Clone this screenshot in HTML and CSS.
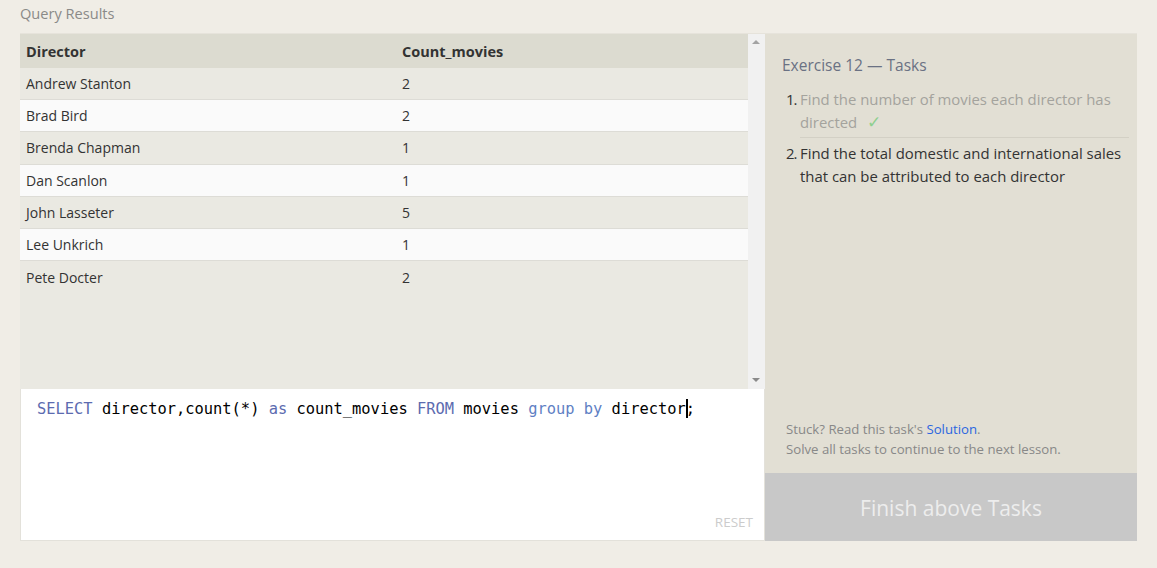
FILE: index.html
```html
<!DOCTYPE html>
<html>
<head>
<meta charset="utf-8">
<link rel="stylesheet" href="styles.css">
</head>
<body>
<div class="page">
  <div class="title">Query Results</div>
  <div class="main">
    <div class="left">
      <div class="results">
        <div class="table">
          <div class="row head"><div class="c1">Director</div><div class="c2">Count_movies</div></div>
          <div class="row"><div class="c1">Andrew Stanton</div><div class="c2">2</div></div>
          <div class="row"><div class="c1">Brad Bird</div><div class="c2">2</div></div>
          <div class="row"><div class="c1">Brenda Chapman</div><div class="c2">1</div></div>
          <div class="row"><div class="c1">Dan Scanlon</div><div class="c2">1</div></div>
          <div class="row"><div class="c1">John Lasseter</div><div class="c2">5</div></div>
          <div class="row"><div class="c1">Lee Unkrich</div><div class="c2">1</div></div>
          <div class="row"><div class="c1">Pete Docter</div><div class="c2">2</div></div>
        </div>
        <div class="scrollbar">
          <span class="arrow up"></span>
          <span class="arrow down"></span>
        </div>
      </div>
      <div class="editor">
        <div class="code"><span class="kw">SELECT</span> director,count(*) <span class="kw">as</span> count_movies <span class="kw">FROM</span> movies <span class="kw2">group</span> <span class="kw2">by</span> director<span class="cursor"></span>;</div>
        <div class="reset">RESET</div>
      </div>
    </div>
    <div class="right">
      <div class="tasks">
        <div class="ex-title">Exercise 12 — Tasks</div>
        <ol class="list">
          <li class="done"><span class="num">1.</span><span class="txt">Find the number of movies each director has directed <span class="check">✓</span></span></li>
          <li class="todo"><span class="num">2.</span><span class="txt">Find the total domestic and international sales that can be attributed to each director</span></li>
        </ol>
        <div class="hint">
          <div>Stuck? Read this task's <span class="link">Solution</span>.</div>
          <div>Solve all tasks to continue to the next lesson.</div>
        </div>
      </div>
      <div class="finish">Finish above Tasks</div>
    </div>
  </div>
</div>
</body>
</html>
```
FILE: styles.css
```css
html, body {
  margin: 0;
  padding: 0;
  background: #f0ede6;
}
body {
  font-family: "Open Sans", "Noto Sans", sans-serif;
  color: #333;
}
.page {
  padding: 0 20px;
}
.title {
  height: 33px;
  line-height: 27px;
  font-size: 14.6px;
  color: #8a8a88;
}
.main {
  display: flex;
  width: 1117px;
  height: 508px;
  border-top: 1px solid #e6e3db;
  box-sizing: border-box;
}
.left {
  width: 745px;
  display: flex;
  flex-direction: column;
}
.results {
  height: 355px;
  display: flex;
  background: #eae9e2;
}
.table {
  flex: 1;
}
.row {
  display: flex;
  height: 32.2px;
  box-sizing: border-box;
  border-bottom: 1px solid #dddcd6;
  font-size: 14px;
  align-items: center;
  background: #eae9e2;
}
.row:nth-child(odd) {
  background: #fafafa;
}
.row.head {
  height: 34px;
  background: #dcdbd0;
  font-weight: 700;
  font-size: 14.5px;
  border-bottom: none;
}
.row:last-child {
  border-bottom: none;
}
.c1 {
  width: 376px;
  padding-left: 6px;
}
.c2 {
  flex: 1;
}
.scrollbar {
  width: 17px;
  background: #f1f1f1;
  position: relative;
}
.arrow {
  position: absolute;
  left: 4px;
  width: 0;
  height: 0;
  border-left: 4px solid transparent;
  border-right: 4px solid transparent;
}
.arrow.up {
  top: 6px;
  border-bottom: 4px solid #a3a3a3;
}
.arrow.down {
  bottom: 7px;
  border-top: 4px solid #8a8a8a;
}
.editor {
  flex: 1;
  background: #fff;
  border: 1px solid #e3e1da;
  border-top: none;
  display: flex;
  flex-direction: column;
  justify-content: space-between;
  padding: 9px 11px 9px 16px;
}
.code {
  font-family: "DejaVu Sans Mono", "Liberation Mono", monospace;
  font-size: 15.4px;
  color: #000;
  line-height: 22px;
}
.kw {
  color: #5c6bb0;
}
.kw2 {
  color: #5f7fc4;
}
.cursor {
  display: inline-block;
  width: 2px;
  height: 19px;
  background: #000;
  vertical-align: -4px;
  margin-right: -2px;
}
.reset {
  align-self: flex-end;
  font-size: 13.5px;
  color: #cccccc;
}
.right {
  width: 372px;
  display: flex;
  flex-direction: column;
  background: #e2dfd4;
}
.tasks {
  flex: 1;
  display: flex;
  flex-direction: column;
  padding: 20px 8px 14px 17px;
}
.ex-title {
  font-size: 15.5px;
  color: #6a7183;
  margin-bottom: 12px;
}
.list {
  list-style: none;
  margin: 0;
  padding: 0 0 0 4px;
  font-size: 14.9px;
  line-height: 23px;
}
.list li {
  display: flex;
}
.num {
  width: 14px;
  color: #333;
  flex: none;
  letter-spacing: -1px;
}
.txt {
  flex: 1;
}
.done .txt {
  color: #a4a39d;
  border-bottom: 1px solid #d3d0c5;
  padding-bottom: 3px;
  margin-bottom: 4px;
}
.check {
  color: #8fcf8f;
  margin-left: 6px;
  font-size: 17px;
  line-height: 20px;
}
.todo .txt {
  color: #333;
}
.hint {
  margin-top: auto;
  font-size: 13.2px;
  line-height: 20px;
  color: #888;
  padding-left: 4px;
}
.link {
  color: #2b66e0;
}
.finish {
  height: 68px;
  background: #c8c8c8;
  color: #ededed;
  font-size: 21px;
  display: flex;
  align-items: center;
  justify-content: center;
  padding-top: 2px;
  box-sizing: border-box;
}
```
